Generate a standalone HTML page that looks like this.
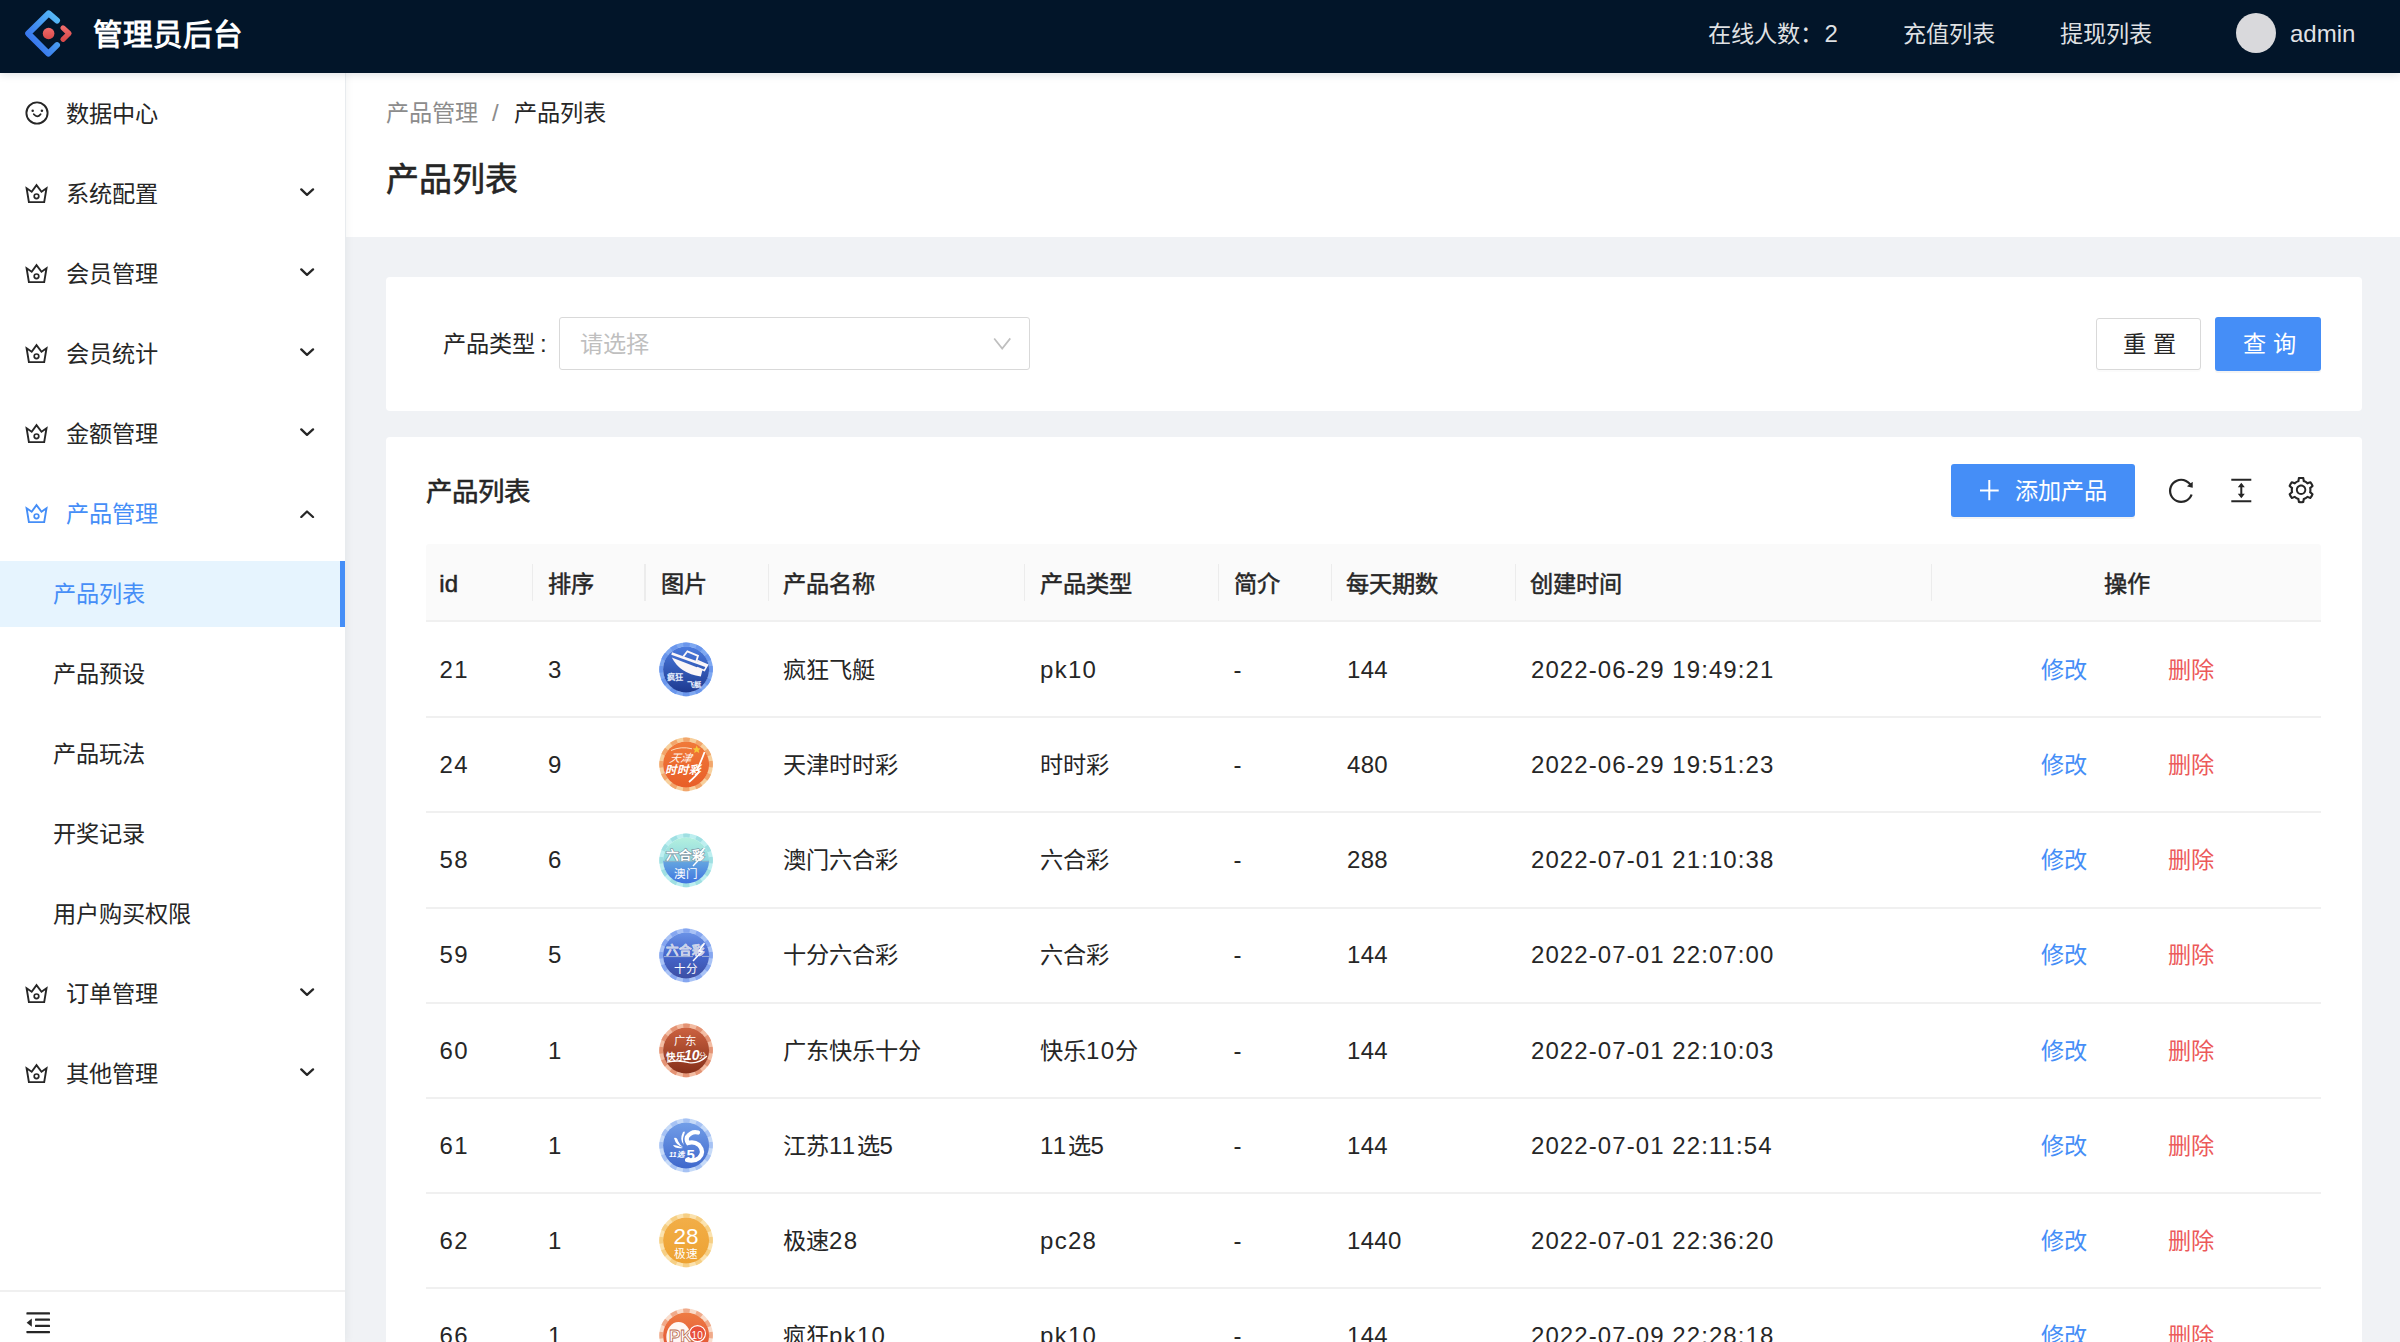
<!DOCTYPE html><html lang="zh-CN"><head><meta charset="utf-8"><title>产品列表</title><style>
html,body{margin:0;padding:0;width:2400px;height:1342px;overflow:hidden;background:#f0f2f5;font-family:"Liberation Sans",sans-serif;}
.t{position:absolute;white-space:nowrap;}
svg text{font-family:"Liberation Sans",sans-serif;}
</style></head><body>
<div style="position:absolute;left:0px;top:0px;width:2400px;height:1342px;background:#f0f2f5"></div>
<div style="position:absolute;left:346px;top:72px;width:2054px;height:165px;background:#fff"></div>
<div style="position:absolute;left:0px;top:72px;width:345px;height:1270px;background:#fff;box-shadow:2px 0 8px 0 rgba(29,35,41,.05)"></div>
<div style="position:absolute;left:0px;top:0px;width:2400px;height:73px;background:#021529;box-shadow:0 2px 8px rgba(0,21,41,.12);z-index:2"></div>
<svg style="position:absolute;left:0;top:0;z-index:3" width="90" height="72" viewBox="0 0 90 72">
<defs>
<linearGradient id="lg1" x1="1" y1="0" x2="0" y2="1"><stop offset="0" stop-color="#58bdf6"/><stop offset="0.6" stop-color="#3f86ee"/><stop offset="1" stop-color="#3468ee"/></linearGradient>
<linearGradient id="lg2" x1="0" y1="0" x2="0" y2="1"><stop offset="0" stop-color="#ef6a6a"/><stop offset="1" stop-color="#d94a4a"/></linearGradient>
</defs>
<path d="M57 20.6 L48.6 13.3 L28.2 33.5 L48.4 53.6 L57 45.2" fill="none" stroke="url(#lg1)" stroke-width="6" stroke-linecap="round" stroke-linejoin="round"/>
<path d="M63 27.9 L69 33.5 L63 39.3" fill="none" stroke="url(#lg2)" stroke-width="5.2" stroke-linecap="round" stroke-linejoin="round"/>
<circle cx="48.6" cy="33.5" r="5.8" fill="url(#lg2)"/>
</svg>
<div class="t " style="left:93.00px;top:19.62px;font-size:29.5px;line-height:29.5px;color:#fff;font-weight:700;z-index:3">管理员后台</div>
<div class="t " style="left:1708.00px;top:23.29px;font-size:23.2px;line-height:23.2px;color:rgba(255,255,255,.88);font-weight:400;z-index:3">在线人数：</div>
<div class="t " style="left:1824.50px;top:22.22px;font-size:24px;line-height:24px;color:rgba(255,255,255,.88);font-weight:400;z-index:3">2</div>
<div class="t " style="left:1903.00px;top:23.29px;font-size:23.2px;line-height:23.2px;color:rgba(255,255,255,.88);font-weight:400;z-index:3">充值列表</div>
<div class="t " style="left:2059.50px;top:23.29px;font-size:23.2px;line-height:23.2px;color:rgba(255,255,255,.88);font-weight:400;z-index:3">提现列表</div>
<div style="position:absolute;left:2235.5px;top:13.3px;width:40px;height:40px;border-radius:50%;background:#d9d9dc;z-index:3"></div>
<div class="t " style="left:2290.00px;top:21.72px;font-size:24px;line-height:24px;color:rgba(255,255,255,.9);font-weight:400;z-index:3">admin</div>
<svg style="position:absolute;left:23.5px;top:100.3px" width="26" height="26" viewBox="0 0 26 26"><circle cx="13" cy="13" r="10.6" fill="none" stroke="#262626" stroke-width="1.9"/><circle cx="8.7" cy="10.7" r="1.25" fill="#262626"/><circle cx="17.9" cy="10.7" r="1.25" fill="#262626"/><path d="M9.8 14.3 Q13.3 18.6 16.6 14.3" fill="none" stroke="#262626" stroke-width="1.8" stroke-linecap="round"/></svg>
<div class="t " style="left:66.00px;top:102.79px;font-size:23.2px;line-height:23.2px;color:#262626;font-weight:400;">数据中心</div>
<svg style="position:absolute;left:23px;top:183.2px" width="26" height="26" viewBox="0 0 26 26"><path d="M3.6 5.2 L8.7 8.7 L13.5 2.1 L18.5 8.7 L23.5 5.2 L21.2 19.1 L5.9 19.1 Z" fill="none" stroke="#262626" stroke-width="1.9" stroke-linejoin="miter"/><circle cx="13.5" cy="13.3" r="2.3" fill="none" stroke="#262626" stroke-width="1.7"/></svg>
<div class="t " style="left:66.00px;top:182.79px;font-size:23.2px;line-height:23.2px;color:#262626;font-weight:400;">系统配置</div>
<svg style="position:absolute;left:299px;top:188.2px" width="16" height="10" viewBox="0 0 16 10"><path d="M2.3 1.4 L8 6.9 L14 1.4" fill="none" stroke="#262626" stroke-width="2.3" stroke-linecap="round" stroke-linejoin="round"/></svg>
<svg style="position:absolute;left:23px;top:263.2px" width="26" height="26" viewBox="0 0 26 26"><path d="M3.6 5.2 L8.7 8.7 L13.5 2.1 L18.5 8.7 L23.5 5.2 L21.2 19.1 L5.9 19.1 Z" fill="none" stroke="#262626" stroke-width="1.9" stroke-linejoin="miter"/><circle cx="13.5" cy="13.3" r="2.3" fill="none" stroke="#262626" stroke-width="1.7"/></svg>
<div class="t " style="left:66.00px;top:262.79px;font-size:23.2px;line-height:23.2px;color:#262626;font-weight:400;">会员管理</div>
<svg style="position:absolute;left:299px;top:268.2px" width="16" height="10" viewBox="0 0 16 10"><path d="M2.3 1.4 L8 6.9 L14 1.4" fill="none" stroke="#262626" stroke-width="2.3" stroke-linecap="round" stroke-linejoin="round"/></svg>
<svg style="position:absolute;left:23px;top:343.2px" width="26" height="26" viewBox="0 0 26 26"><path d="M3.6 5.2 L8.7 8.7 L13.5 2.1 L18.5 8.7 L23.5 5.2 L21.2 19.1 L5.9 19.1 Z" fill="none" stroke="#262626" stroke-width="1.9" stroke-linejoin="miter"/><circle cx="13.5" cy="13.3" r="2.3" fill="none" stroke="#262626" stroke-width="1.7"/></svg>
<div class="t " style="left:66.00px;top:342.79px;font-size:23.2px;line-height:23.2px;color:#262626;font-weight:400;">会员统计</div>
<svg style="position:absolute;left:299px;top:348.2px" width="16" height="10" viewBox="0 0 16 10"><path d="M2.3 1.4 L8 6.9 L14 1.4" fill="none" stroke="#262626" stroke-width="2.3" stroke-linecap="round" stroke-linejoin="round"/></svg>
<svg style="position:absolute;left:23px;top:423.2px" width="26" height="26" viewBox="0 0 26 26"><path d="M3.6 5.2 L8.7 8.7 L13.5 2.1 L18.5 8.7 L23.5 5.2 L21.2 19.1 L5.9 19.1 Z" fill="none" stroke="#262626" stroke-width="1.9" stroke-linejoin="miter"/><circle cx="13.5" cy="13.3" r="2.3" fill="none" stroke="#262626" stroke-width="1.7"/></svg>
<div class="t " style="left:66.00px;top:422.79px;font-size:23.2px;line-height:23.2px;color:#262626;font-weight:400;">金额管理</div>
<svg style="position:absolute;left:299px;top:428.2px" width="16" height="10" viewBox="0 0 16 10"><path d="M2.3 1.4 L8 6.9 L14 1.4" fill="none" stroke="#262626" stroke-width="2.3" stroke-linecap="round" stroke-linejoin="round"/></svg>
<svg style="position:absolute;left:23px;top:503.2px" width="26" height="26" viewBox="0 0 26 26"><path d="M3.6 5.2 L8.7 8.7 L13.5 2.1 L18.5 8.7 L23.5 5.2 L21.2 19.1 L5.9 19.1 Z" fill="none" stroke="#458ef7" stroke-width="1.9" stroke-linejoin="miter"/><circle cx="13.5" cy="13.3" r="2.3" fill="none" stroke="#458ef7" stroke-width="1.7"/></svg>
<div class="t " style="left:66.00px;top:502.79px;font-size:23.2px;line-height:23.2px;color:#458ef7;font-weight:400;">产品管理</div>
<svg style="position:absolute;left:299px;top:508.2px" width="16" height="10" viewBox="0 0 16 10"><path d="M2.3 9.0 L8 3.5 L14 9.0" fill="none" stroke="#262626" stroke-width="2.3" stroke-linecap="round" stroke-linejoin="round"/></svg>
<div style="position:absolute;left:0px;top:561px;width:345px;height:66px;background:#e6f4fe"></div>
<div style="position:absolute;left:340px;top:561px;width:5px;height:66px;background:#458ef7"></div>
<div class="t " style="left:53.00px;top:582.79px;font-size:23.2px;line-height:23.2px;color:#458ef7;font-weight:400;">产品列表</div>
<div class="t " style="left:53.00px;top:662.79px;font-size:23.2px;line-height:23.2px;color:#262626;font-weight:400;">产品预设</div>
<div class="t " style="left:53.00px;top:742.79px;font-size:23.2px;line-height:23.2px;color:#262626;font-weight:400;">产品玩法</div>
<div class="t " style="left:53.00px;top:822.79px;font-size:23.2px;line-height:23.2px;color:#262626;font-weight:400;">开奖记录</div>
<div class="t " style="left:53.00px;top:902.79px;font-size:23.2px;line-height:23.2px;color:#262626;font-weight:400;">用户购买权限</div>
<svg style="position:absolute;left:23px;top:983.2px" width="26" height="26" viewBox="0 0 26 26"><path d="M3.6 5.2 L8.7 8.7 L13.5 2.1 L18.5 8.7 L23.5 5.2 L21.2 19.1 L5.9 19.1 Z" fill="none" stroke="#262626" stroke-width="1.9" stroke-linejoin="miter"/><circle cx="13.5" cy="13.3" r="2.3" fill="none" stroke="#262626" stroke-width="1.7"/></svg>
<div class="t " style="left:66.00px;top:982.79px;font-size:23.2px;line-height:23.2px;color:#262626;font-weight:400;">订单管理</div>
<svg style="position:absolute;left:299px;top:988.2px" width="16" height="10" viewBox="0 0 16 10"><path d="M2.3 1.4 L8 6.9 L14 1.4" fill="none" stroke="#262626" stroke-width="2.3" stroke-linecap="round" stroke-linejoin="round"/></svg>
<svg style="position:absolute;left:23px;top:1063.2px" width="26" height="26" viewBox="0 0 26 26"><path d="M3.6 5.2 L8.7 8.7 L13.5 2.1 L18.5 8.7 L23.5 5.2 L21.2 19.1 L5.9 19.1 Z" fill="none" stroke="#262626" stroke-width="1.9" stroke-linejoin="miter"/><circle cx="13.5" cy="13.3" r="2.3" fill="none" stroke="#262626" stroke-width="1.7"/></svg>
<div class="t " style="left:66.00px;top:1062.79px;font-size:23.2px;line-height:23.2px;color:#262626;font-weight:400;">其他管理</div>
<svg style="position:absolute;left:299px;top:1068.2px" width="16" height="10" viewBox="0 0 16 10"><path d="M2.3 1.4 L8 6.9 L14 1.4" fill="none" stroke="#262626" stroke-width="2.3" stroke-linecap="round" stroke-linejoin="round"/></svg>
<div style="position:absolute;left:0px;top:1290px;width:345px;height:2px;background:#f0f0f0"></div>
<svg style="position:absolute;left:20px;top:1306px" width="36" height="36" viewBox="0 0 36 36"><g fill="#262626"><rect x="6.4" y="6.3" width="23.6" height="2.2" rx="0.6"/><rect x="15" y="12.6" width="15" height="2.2" rx="0.6"/><rect x="15" y="18.8" width="15" height="2.2" rx="0.6"/><rect x="6.4" y="25" width="23.6" height="2.2" rx="0.6"/><path d="M6.6 16.8 L11.8 12.6 L11.8 20.8 Z"/></g></svg>
<div class="t " style="left:386.00px;top:101.79px;font-size:23.2px;line-height:23.2px;color:#8c8c8c;font-weight:400;">产品管理</div>
<div class="t " style="left:492.00px;top:100.72px;font-size:24px;line-height:24px;color:#8c8c8c;font-weight:400;">/</div>
<div class="t " style="left:513.50px;top:101.79px;font-size:23.2px;line-height:23.2px;color:#262626;font-weight:400;">产品列表</div>
<div class="t " style="left:386.00px;top:162.78px;font-size:33px;line-height:33px;color:#262626;font-weight:400;-webkit-text-stroke:0.6px #262626">产品列表</div>
<div style="position:absolute;left:386px;top:277px;width:1976px;height:134px;background:#fff;border-radius:4px"></div>
<div class="t " style="left:443.00px;top:333.29px;font-size:23.2px;line-height:23.2px;color:#262626;font-weight:400;">产品类型</div>
<div class="t " style="left:540.00px;top:332.22px;font-size:24px;line-height:24px;color:#262626;font-weight:400;">:</div>
<div style="position:absolute;left:559px;top:317px;width:471px;height:53px;box-sizing:border-box;border:1.8px solid #d9d9d9;border-radius:3px;background:#fff"></div>
<div class="t " style="left:580.00px;top:333.29px;font-size:23.2px;line-height:23.2px;color:#bfbfbf;font-weight:400;">请选择</div>
<svg style="position:absolute;left:990px;top:334px" width="24" height="20" viewBox="0 0 24 20"><path d="M4.2 4.4 L12.2 14.6 L20.3 4.4" fill="none" stroke="#bfbfbf" stroke-width="1.7"/></svg>
<div style="position:absolute;left:2096px;top:317.5px;width:105px;height:52.5px;box-sizing:border-box;border:1.8px solid #d9d9d9;border-radius:3px;background:#fff;box-shadow:0 2px 0 rgba(0,0,0,.016)"></div>
<div class="t " style="left:2123.00px;top:333.29px;font-size:23.2px;line-height:23.2px;color:#262626;font-weight:400;">重</div>
<div class="t " style="left:2153.20px;top:333.29px;font-size:23.2px;line-height:23.2px;color:#262626;font-weight:400;">置</div>
<div style="position:absolute;left:2215px;top:317px;width:106px;height:53.5px;border-radius:3px;background:#458ef7;box-shadow:0 2px 0 rgba(0,0,0,.045)"></div>
<div class="t " style="left:2242.80px;top:333.29px;font-size:23.2px;line-height:23.2px;color:#fff;font-weight:400;">查</div>
<div class="t " style="left:2272.50px;top:333.29px;font-size:23.2px;line-height:23.2px;color:#fff;font-weight:400;">询</div>
<div style="position:absolute;left:386px;top:437px;width:1976px;height:963px;background:#fff;border-radius:4px"></div>
<div class="t " style="left:426.00px;top:479.34px;font-size:26.5px;line-height:26.5px;color:#262626;font-weight:400;-webkit-text-stroke:0.55px #262626">产品列表</div>
<div style="position:absolute;left:1951px;top:464px;width:183.5px;height:53px;border-radius:3px;background:#458ef7;box-shadow:0 2px 0 rgba(0,0,0,.045)"></div>
<svg style="position:absolute;left:1977px;top:478px" width="24" height="24" viewBox="0 0 24 24"><path d="M12.3 2 V22.3 M3 12.5 H21.7" stroke="#fff" stroke-width="2" fill="none"/></svg>
<div class="t " style="left:2015.30px;top:480.39px;font-size:23.2px;line-height:23.2px;color:#fff;font-weight:400;">添加产品</div>
<svg style="position:absolute;left:2166.3px;top:475.6px" width="29.7" height="29.7" viewBox="0 0 1024 1024"><path fill="#262626" d="M909.1 209.3l-56.4 44.1C775.8 155.1 656.2 92 521.9 92 290 92 102.3 279.5 102 511.5 101.7 743.7 289.8 932 521.9 932c181.3 0 335.8-115 394.6-276.1 1.5-4.2-.7-8.9-4.9-10.3l-56.7-19.5a8 8 0 0 0-10.1 4.8c-1.8 5-3.8 10-5.9 14.9-17.3 41-42.1 77.8-73.700 109.4A344.77 344.77 0 0 1 655.9 829c-42.3 17.9-87.4 27-133.8 27-46.5 0-91.5-9.1-133.8-27A341.5 341.5 0 0 1 279 755.2a342.16 342.16 0 0 1-73.7-109.4c-17.9-42.4-27-87.4-27-133.9s9.1-91.5 27-133.9c17.3-41 42.1-77.8 73.7-109.4 31.6-31.6 68.4-56.4 109.3-73.8 42.3-17.9 87.4-27 133.8-27 46.5 0 91.5 9.1 133.8 27a341.5 341.5 0 0 1 109.3 73.8c9.900 9.9 19.2 20.4 27.8 31.4l-60.2 47a8 8 0 0 0 3 14.1l175.6 43c5 1.2 9.9-2.6 9.9-7.7l.8-180.9c-.1-6.6-7.8-10.3-13-6.2z"/></svg>
<svg style="position:absolute;left:2225px;top:474px" width="32" height="34" viewBox="0 0 32 34"><g stroke="#262626" stroke-width="2" fill="none"><path d="M6.3 5.7 H26.3 M6.3 27.2 H26.3 M16.3 10.5 V22.5"/></g><path d="M16.3 8.8 L12.8 13.2 H19.8 Z M16.3 24.2 L12.8 19.8 H19.8 Z" fill="#262626"/></svg>
<svg style="position:absolute;left:2286.3px;top:475.4px" width="30.2" height="30.2" viewBox="0 0 1024 1024"><path fill="#262626" d="M924.8 625.7l-65.5-56c3.1-19 4.7-38.4 4.7-57.8s-1.6-38.8-4.7-57.8l65.5-56a32.03 32.03 0 0 0 9.3-35.2l-.9-2.6a443.74 443.74 0 0 0-79.7-137.9l-1.8-2.1a32.12 32.12 0 0 0-35.1-9.5l-81.3 28.9c-30-24.6-63.5-44-99.7-57.6l-15.7-85a32.05 32.05 0 0 0-25.8-25.7l-2.7-.5c-52.1-9.4-106.9-9.4-159 0l-2.7.5a32.05 32.05 0 0 0-25.8 25.7l-15.8 85.4a351.86 351.86 0 0 0-99 57.4l-81.9-29.1a32 32 0 0 0-35.1 9.5l-1.8 2.1a446.02 446.02 0 0 0-79.7 137.9l-.9 2.6c-4.5 12.5-.8 26.5 9.3 35.2l66.3 56.6c-3.1 18.8-4.6 38-4.6 57.1 0 19.2 1.5 38.4 4.6 57.1L99 625.5a32.03 32.03 0 0 0-9.3 35.2l.9 2.6c18.1 50.4 44.9 96.9 79.7 137.9l1.8 2.1a32.12 32.12 0 0 0 35.1 9.5l81.9-29.1c29.8 24.5 63.1 43.9 99 57.4l15.8 85.4a32.05 32.05 0 0 0 25.8 25.7l2.7.5a449.4 449.4 0 0 0 159 0l2.7-.5a32.05 32.05 0 0 0 25.8-25.7l15.7-85a350 350 0 0 0 99.7-57.6l81.3 28.9a32 32 0 0 0 35.1-9.5l1.8-2.1c34.8-41.1 61.6-87.5 79.7-137.9l.9-2.6c4.5-12.3.8-26.3-9.3-35zM788.3 465.9c2.5 15.1 3.8 30.6 3.8 46.1s-1.3 31-3.8 46.1l-6.6 40.1 74.7 63.9a370.03 370.03 0 0 1-42.6 73.6L721 702.8l-31.4 25.8c-23.9 19.6-50.5 35-79.3 45.8l-38.1 14.3-17.9 97a377.5 377.5 0 0 1-85 0l-17.9-97.2-37.8-14.5c-28.5-10.8-55-26.2-78.7-45.7l-31.4-25.9-93.4 33.2c-17-22.9-31.2-47.6-42.6-73.6l75.5-64.5-6.5-40c-2.4-14.9-3.7-30.3-3.7-45.5 0-15.3 1.2-30.6 3.7-45.5l6.5-40-75.5-64.5c11.3-26.1 25.6-50.7 42.6-73.6l93.4 33.2 31.4-25.9c23.7-19.5 50.2-34.9 78.7-45.7l37.9-14.3 17.9-97.2c28.1-3.2 56.8-3.2 85 0l17.9 97 38.1 14.3c28.7 10.8 55.4 26.2 79.3 45.8l31.4 25.8 92.8-32.9c17 22.9 31.2 47.6 42.6 73.6L781.8 426l6.5 39.9zM512 326c-97.2 0-176 78.8-176 176s78.8 176 176 176 176-78.8 176-176-78.8-176-176-176zm79.2 255.2A111.6 111.6 0 0 1 512 614c-29.9 0-58-11.7-79.2-32.8A111.6 111.6 0 0 1 400 502c0-29.9 11.7-58 32.8-79.2C454 401.6 482.1 390 512 390c29.9 0 58 11.6 79.2 32.8A111.6 111.6 0 0 1 624 502c0 29.9-11.7 58-32.8 79.2z"/></svg>
<div style="position:absolute;left:426px;top:544px;width:1895px;height:77px;background:#fafafa;border-radius:3px 3px 0 0"></div>
<div style="position:absolute;left:426px;top:620px;width:1895px;height:2px;background:#f0f0f0"></div>
<div style="position:absolute;left:531.9px;top:564px;width:1.6px;height:37px;background:#ececec"></div>
<div style="position:absolute;left:644.4px;top:564px;width:1.6px;height:37px;background:#ececec"></div>
<div style="position:absolute;left:767.7px;top:564px;width:1.6px;height:37px;background:#ececec"></div>
<div style="position:absolute;left:1023.7px;top:564px;width:1.6px;height:37px;background:#ececec"></div>
<div style="position:absolute;left:1217.5px;top:564px;width:1.6px;height:37px;background:#ececec"></div>
<div style="position:absolute;left:1330.5px;top:564px;width:1.6px;height:37px;background:#ececec"></div>
<div style="position:absolute;left:1514.7px;top:564px;width:1.6px;height:37px;background:#ececec"></div>
<div style="position:absolute;left:1930.5px;top:564px;width:1.6px;height:37px;background:#ececec"></div>
<div class="t " style="left:439.30px;top:571.72px;font-size:24px;line-height:24px;color:#262626;font-weight:400;-webkit-text-stroke:0.5px #262626">id</div>
<div class="t " style="left:547.70px;top:572.79px;font-size:23.2px;line-height:23.2px;color:#262626;font-weight:400;-webkit-text-stroke:0.5px #262626">排序</div>
<div class="t " style="left:661.00px;top:572.79px;font-size:23.2px;line-height:23.2px;color:#262626;font-weight:400;-webkit-text-stroke:0.5px #262626">图片</div>
<div class="t " style="left:783.00px;top:572.79px;font-size:23.2px;line-height:23.2px;color:#262626;font-weight:400;-webkit-text-stroke:0.5px #262626">产品名称</div>
<div class="t " style="left:1040.00px;top:572.79px;font-size:23.2px;line-height:23.2px;color:#262626;font-weight:400;-webkit-text-stroke:0.5px #262626">产品类型</div>
<div class="t " style="left:1233.70px;top:572.79px;font-size:23.2px;line-height:23.2px;color:#262626;font-weight:400;-webkit-text-stroke:0.5px #262626">简介</div>
<div class="t " style="left:1346.30px;top:572.79px;font-size:23.2px;line-height:23.2px;color:#262626;font-weight:400;-webkit-text-stroke:0.5px #262626">每天期数</div>
<div class="t " style="left:1530.00px;top:572.79px;font-size:23.2px;line-height:23.2px;color:#262626;font-weight:400;-webkit-text-stroke:0.5px #262626">创建时间</div>
<div class="t " style="left:1626.80px;width:1000px;text-align:center;top:572.79px;font-size:23.2px;line-height:23.2px;color:#262626;font-weight:400;-webkit-text-stroke:0.5px #262626">操作</div>
<div style="position:absolute;left:426px;top:716px;width:1895px;height:2px;background:#f0f0f0"></div>
<div class="t " style="left:439.50px;top:657.92px;font-size:24px;line-height:24px;color:#262626;font-weight:400;"><span style="letter-spacing:1.3px">21</span></div>
<div class="t " style="left:548.00px;top:657.92px;font-size:24px;line-height:24px;color:#262626;font-weight:400;"><span style="letter-spacing:1.3px">3</span></div>
<div class="t " style="left:783.00px;top:658.99px;font-size:23.2px;line-height:23.2px;color:#262626;font-weight:400;">疯狂飞艇</div>
<div class="t " style="left:1040.00px;top:657.92px;font-size:24px;line-height:24px;color:#262626;font-weight:400;"><span style="letter-spacing:1.3px">pk10</span></div>
<div class="t " style="left:1233.50px;top:657.92px;font-size:24px;line-height:24px;color:#262626;font-weight:400;">-</div>
<div class="t " style="left:1347.00px;top:657.92px;font-size:24px;line-height:24px;color:#262626;font-weight:400;"><span style="letter-spacing:0.3px">144</span></div>
<div class="t " style="left:1531.00px;top:657.92px;font-size:24px;line-height:24px;color:#262626;font-weight:400;"><span style="letter-spacing:1.08px">2022-06-29 19:49:21</span></div>
<div class="t " style="left:2040.60px;top:658.99px;font-size:23.2px;line-height:23.2px;color:#458ef7;font-weight:400;">修改</div>
<div class="t " style="left:2167.70px;top:658.99px;font-size:23.2px;line-height:23.2px;color:#ec5a5a;font-weight:400;">删除</div>
<div style="position:absolute;left:426px;top:811px;width:1895px;height:2px;background:#f0f0f0"></div>
<div class="t " style="left:439.50px;top:753.07px;font-size:24px;line-height:24px;color:#262626;font-weight:400;"><span style="letter-spacing:1.3px">24</span></div>
<div class="t " style="left:548.00px;top:753.07px;font-size:24px;line-height:24px;color:#262626;font-weight:400;"><span style="letter-spacing:1.3px">9</span></div>
<div class="t " style="left:783.00px;top:754.14px;font-size:23.2px;line-height:23.2px;color:#262626;font-weight:400;">天津时时彩</div>
<div class="t " style="left:1040.00px;top:754.14px;font-size:23.2px;line-height:23.2px;color:#262626;font-weight:400;">时时彩</div>
<div class="t " style="left:1233.50px;top:753.07px;font-size:24px;line-height:24px;color:#262626;font-weight:400;">-</div>
<div class="t " style="left:1347.00px;top:753.07px;font-size:24px;line-height:24px;color:#262626;font-weight:400;"><span style="letter-spacing:0.3px">480</span></div>
<div class="t " style="left:1531.00px;top:753.07px;font-size:24px;line-height:24px;color:#262626;font-weight:400;"><span style="letter-spacing:1.08px">2022-06-29 19:51:23</span></div>
<div class="t " style="left:2040.60px;top:754.14px;font-size:23.2px;line-height:23.2px;color:#458ef7;font-weight:400;">修改</div>
<div class="t " style="left:2167.70px;top:754.14px;font-size:23.2px;line-height:23.2px;color:#ec5a5a;font-weight:400;">删除</div>
<div style="position:absolute;left:426px;top:907px;width:1895px;height:2px;background:#f0f0f0"></div>
<div class="t " style="left:439.50px;top:848.22px;font-size:24px;line-height:24px;color:#262626;font-weight:400;"><span style="letter-spacing:1.3px">58</span></div>
<div class="t " style="left:548.00px;top:848.22px;font-size:24px;line-height:24px;color:#262626;font-weight:400;"><span style="letter-spacing:1.3px">6</span></div>
<div class="t " style="left:783.00px;top:849.29px;font-size:23.2px;line-height:23.2px;color:#262626;font-weight:400;">澳门六合彩</div>
<div class="t " style="left:1040.00px;top:849.29px;font-size:23.2px;line-height:23.2px;color:#262626;font-weight:400;">六合彩</div>
<div class="t " style="left:1233.50px;top:848.22px;font-size:24px;line-height:24px;color:#262626;font-weight:400;">-</div>
<div class="t " style="left:1347.00px;top:848.22px;font-size:24px;line-height:24px;color:#262626;font-weight:400;"><span style="letter-spacing:0.3px">288</span></div>
<div class="t " style="left:1531.00px;top:848.22px;font-size:24px;line-height:24px;color:#262626;font-weight:400;"><span style="letter-spacing:1.08px">2022-07-01 21:10:38</span></div>
<div class="t " style="left:2040.60px;top:849.29px;font-size:23.2px;line-height:23.2px;color:#458ef7;font-weight:400;">修改</div>
<div class="t " style="left:2167.70px;top:849.29px;font-size:23.2px;line-height:23.2px;color:#ec5a5a;font-weight:400;">删除</div>
<div style="position:absolute;left:426px;top:1002px;width:1895px;height:2px;background:#f0f0f0"></div>
<div class="t " style="left:439.50px;top:943.37px;font-size:24px;line-height:24px;color:#262626;font-weight:400;"><span style="letter-spacing:1.3px">59</span></div>
<div class="t " style="left:548.00px;top:943.37px;font-size:24px;line-height:24px;color:#262626;font-weight:400;"><span style="letter-spacing:1.3px">5</span></div>
<div class="t " style="left:783.00px;top:944.44px;font-size:23.2px;line-height:23.2px;color:#262626;font-weight:400;">十分六合彩</div>
<div class="t " style="left:1040.00px;top:944.44px;font-size:23.2px;line-height:23.2px;color:#262626;font-weight:400;">六合彩</div>
<div class="t " style="left:1233.50px;top:943.37px;font-size:24px;line-height:24px;color:#262626;font-weight:400;">-</div>
<div class="t " style="left:1347.00px;top:943.37px;font-size:24px;line-height:24px;color:#262626;font-weight:400;"><span style="letter-spacing:0.3px">144</span></div>
<div class="t " style="left:1531.00px;top:943.37px;font-size:24px;line-height:24px;color:#262626;font-weight:400;"><span style="letter-spacing:1.08px">2022-07-01 22:07:00</span></div>
<div class="t " style="left:2040.60px;top:944.44px;font-size:23.2px;line-height:23.2px;color:#458ef7;font-weight:400;">修改</div>
<div class="t " style="left:2167.70px;top:944.44px;font-size:23.2px;line-height:23.2px;color:#ec5a5a;font-weight:400;">删除</div>
<div style="position:absolute;left:426px;top:1097px;width:1895px;height:2px;background:#f0f0f0"></div>
<div class="t " style="left:439.50px;top:1038.52px;font-size:24px;line-height:24px;color:#262626;font-weight:400;"><span style="letter-spacing:1.3px">60</span></div>
<div class="t " style="left:548.00px;top:1038.52px;font-size:24px;line-height:24px;color:#262626;font-weight:400;"><span style="letter-spacing:1.3px">1</span></div>
<div class="t " style="left:783.00px;top:1039.59px;font-size:23.2px;line-height:23.2px;color:#262626;font-weight:400;">广东快乐十分</div>
<div class="t " style="left:1040.00px;top:1039.59px;font-size:23.2px;line-height:23.2px;color:#262626;font-weight:400;">快乐<span style="font-size:24px;line-height:0;letter-spacing:1.3px">10</span>分</div>
<div class="t " style="left:1233.50px;top:1038.52px;font-size:24px;line-height:24px;color:#262626;font-weight:400;">-</div>
<div class="t " style="left:1347.00px;top:1038.52px;font-size:24px;line-height:24px;color:#262626;font-weight:400;"><span style="letter-spacing:0.3px">144</span></div>
<div class="t " style="left:1531.00px;top:1038.52px;font-size:24px;line-height:24px;color:#262626;font-weight:400;"><span style="letter-spacing:1.08px">2022-07-01 22:10:03</span></div>
<div class="t " style="left:2040.60px;top:1039.59px;font-size:23.2px;line-height:23.2px;color:#458ef7;font-weight:400;">修改</div>
<div class="t " style="left:2167.70px;top:1039.59px;font-size:23.2px;line-height:23.2px;color:#ec5a5a;font-weight:400;">删除</div>
<div style="position:absolute;left:426px;top:1192px;width:1895px;height:2px;background:#f0f0f0"></div>
<div class="t " style="left:439.50px;top:1133.67px;font-size:24px;line-height:24px;color:#262626;font-weight:400;"><span style="letter-spacing:1.3px">61</span></div>
<div class="t " style="left:548.00px;top:1133.67px;font-size:24px;line-height:24px;color:#262626;font-weight:400;"><span style="letter-spacing:1.3px">1</span></div>
<div class="t " style="left:783.00px;top:1134.74px;font-size:23.2px;line-height:23.2px;color:#262626;font-weight:400;">江苏<span style="font-size:24px;line-height:0;letter-spacing:1.3px">11</span>选<span style="font-size:24px;line-height:0;letter-spacing:1.3px">5</span></div>
<div class="t " style="left:1040.00px;top:1134.74px;font-size:23.2px;line-height:23.2px;color:#262626;font-weight:400;"><span style="font-size:24px;line-height:0;letter-spacing:1.3px">11</span>选<span style="font-size:24px;line-height:0;letter-spacing:1.3px">5</span></div>
<div class="t " style="left:1233.50px;top:1133.67px;font-size:24px;line-height:24px;color:#262626;font-weight:400;">-</div>
<div class="t " style="left:1347.00px;top:1133.67px;font-size:24px;line-height:24px;color:#262626;font-weight:400;"><span style="letter-spacing:0.3px">144</span></div>
<div class="t " style="left:1531.00px;top:1133.67px;font-size:24px;line-height:24px;color:#262626;font-weight:400;"><span style="letter-spacing:1.08px">2022-07-01 22:11:54</span></div>
<div class="t " style="left:2040.60px;top:1134.74px;font-size:23.2px;line-height:23.2px;color:#458ef7;font-weight:400;">修改</div>
<div class="t " style="left:2167.70px;top:1134.74px;font-size:23.2px;line-height:23.2px;color:#ec5a5a;font-weight:400;">删除</div>
<div style="position:absolute;left:426px;top:1287px;width:1895px;height:2px;background:#f0f0f0"></div>
<div class="t " style="left:439.50px;top:1228.82px;font-size:24px;line-height:24px;color:#262626;font-weight:400;"><span style="letter-spacing:1.3px">62</span></div>
<div class="t " style="left:548.00px;top:1228.82px;font-size:24px;line-height:24px;color:#262626;font-weight:400;"><span style="letter-spacing:1.3px">1</span></div>
<div class="t " style="left:783.00px;top:1229.89px;font-size:23.2px;line-height:23.2px;color:#262626;font-weight:400;">极速<span style="font-size:24px;line-height:0;letter-spacing:1.3px">28</span></div>
<div class="t " style="left:1040.00px;top:1228.82px;font-size:24px;line-height:24px;color:#262626;font-weight:400;"><span style="letter-spacing:1.3px">pc28</span></div>
<div class="t " style="left:1233.50px;top:1228.82px;font-size:24px;line-height:24px;color:#262626;font-weight:400;">-</div>
<div class="t " style="left:1347.00px;top:1228.82px;font-size:24px;line-height:24px;color:#262626;font-weight:400;"><span style="letter-spacing:0.3px">1440</span></div>
<div class="t " style="left:1531.00px;top:1228.82px;font-size:24px;line-height:24px;color:#262626;font-weight:400;"><span style="letter-spacing:1.08px">2022-07-01 22:36:20</span></div>
<div class="t " style="left:2040.60px;top:1229.89px;font-size:23.2px;line-height:23.2px;color:#458ef7;font-weight:400;">修改</div>
<div class="t " style="left:2167.70px;top:1229.89px;font-size:23.2px;line-height:23.2px;color:#ec5a5a;font-weight:400;">删除</div>
<div style="position:absolute;left:426px;top:1382px;width:1895px;height:2px;background:#f0f0f0"></div>
<div class="t " style="left:439.50px;top:1323.97px;font-size:24px;line-height:24px;color:#262626;font-weight:400;"><span style="letter-spacing:1.3px">66</span></div>
<div class="t " style="left:548.00px;top:1323.97px;font-size:24px;line-height:24px;color:#262626;font-weight:400;"><span style="letter-spacing:1.3px">1</span></div>
<div class="t " style="left:783.00px;top:1325.04px;font-size:23.2px;line-height:23.2px;color:#262626;font-weight:400;">疯狂<span style="font-size:24px;line-height:0;letter-spacing:1.3px">pk10</span></div>
<div class="t " style="left:1040.00px;top:1323.97px;font-size:24px;line-height:24px;color:#262626;font-weight:400;"><span style="letter-spacing:1.3px">pk10</span></div>
<div class="t " style="left:1233.50px;top:1323.97px;font-size:24px;line-height:24px;color:#262626;font-weight:400;">-</div>
<div class="t " style="left:1347.00px;top:1323.97px;font-size:24px;line-height:24px;color:#262626;font-weight:400;"><span style="letter-spacing:0.3px">144</span></div>
<div class="t " style="left:1531.00px;top:1323.97px;font-size:24px;line-height:24px;color:#262626;font-weight:400;"><span style="letter-spacing:1.08px">2022-07-09 22:28:18</span></div>
<div class="t " style="left:2040.60px;top:1325.04px;font-size:23.2px;line-height:23.2px;color:#458ef7;font-weight:400;">修改</div>
<div class="t " style="left:2167.70px;top:1325.04px;font-size:23.2px;line-height:23.2px;color:#ec5a5a;font-weight:400;">删除</div>
<svg style="position:absolute;left:659px;top:642.2px" width="54" height="55" viewBox="0 0 54 55"><defs><linearGradient id="pg1" x1="0" y1="0" x2="0" y2="1"><stop offset="0" stop-color="#4b7bde"/><stop offset="1" stop-color="#1d3990"/></linearGradient></defs><circle cx="27.1" cy="27.4" r="24.85" fill="none" stroke="#7ea8f2" stroke-width="3.9"/><circle cx="27.1" cy="27.4" r="24.85" fill="none" stroke="#6a96ec" stroke-width="3.9" stroke-dasharray="6.5 6.5" transform="rotate(-8 27.1 27.4)"/><circle cx="27.1" cy="27.4" r="23" fill="url(#pg1)"/><path d="M12.8 15.4 L43.6 27.6 L41.8 34.4 Q21 31.5 12.8 15.4 Z" fill="#fbf6f8"/><path d="M13 10.2 L48.8 23 L47.8 25.6 L12.3 12.8 Z" fill="#fbf6f8"/><path d="M24.3 14.6 L28.4 9.3 L39 13.8 L37 20.2" fill="none" stroke="#fbf6f8" stroke-width="1.8"/><path d="M38.2 18.4 L48.4 23 L45.4 28.6 L38 25.6" fill="none" stroke="#fbf6f8" stroke-width="1.6"/><text x="7.6" y="37.6" font-size="8.2" fill="#e8eefc" font-weight="bold">疯狂</text><text x="27.6" y="45.4" font-size="7.2" fill="#e8eefc" font-weight="bold">飞艇</text></svg>
<svg style="position:absolute;left:659px;top:737.4px" width="54" height="55" viewBox="0 0 54 55"><defs><linearGradient id="pg2" x1="0" y1="0" x2="0" y2="1"><stop offset="0" stop-color="#f07a3a"/><stop offset="1" stop-color="#e85e28"/></linearGradient></defs><circle cx="27.1" cy="27.4" r="24.85" fill="none" stroke="#f7cf9c" stroke-width="3.9"/><circle cx="27.1" cy="27.4" r="24.85" fill="none" stroke="#f2a66c" stroke-width="3.9" stroke-dasharray="6.5 6.5" transform="rotate(-8 27.1 27.4)"/><circle cx="27.1" cy="27.4" r="23" fill="url(#pg2)"/><path d="M12 13.5 Q22 9 33 11.8" fill="none" stroke="#fde6c8" stroke-width="0.9"/><path d="M37.7 8.6 L38.9 11.2 L41.6 11.5 L39.6 13.3 L40.2 16 L37.7 14.6 L35.2 16 L35.8 13.3 L33.8 11.5 L36.5 11.2 Z" fill="#f5c838"/><text x="11" y="24.8" font-size="11" fill="#fff3ea" font-style="italic" transform="skewX(-12) translate(4 0)">天津</text><text x="8.5" y="37" font-size="11.5" fill="#fff" font-weight="bold" transform="skewX(-14) translate(7 0)">时时彩</text><path d="M45.6 15 Q41 27 38 33 Q44 33 30 45" fill="none" stroke="#fff" stroke-width="1.8"/></svg>
<svg style="position:absolute;left:659px;top:832.5px" width="54" height="55" viewBox="0 0 54 55"><defs><linearGradient id="pg3" x1="0" y1="0" x2="0" y2="1"><stop offset="0" stop-color="#b4f0de"/><stop offset="0.5" stop-color="#8fd8e0"/><stop offset="0.52" stop-color="#64a6e0"/><stop offset="1" stop-color="#3f74e0"/></linearGradient></defs><circle cx="27.1" cy="27.4" r="24.85" fill="none" stroke="#bdeff0" stroke-width="3.9"/><circle cx="27.1" cy="27.4" r="24.85" fill="none" stroke="#9fdfe2" stroke-width="3.9" stroke-dasharray="6.5 6.5" transform="rotate(-8 27.1 27.4)"/><circle cx="27.1" cy="27.4" r="23" fill="url(#pg3)"/><text x="7.4" y="27.4" font-size="12.5" fill="#fff" font-weight="bold" stroke="#7d96a4" stroke-width="1.3" paint-order="stroke">六合彩</text><path d="M5 28.6 H34 M43 28.4 H50" stroke="#8ab0c8" stroke-width="0.9"/><path d="M45.5 15 L40 23 L43 23.5 L34 33" fill="none" stroke="#fff" stroke-width="1.4"/><text x="14.8" y="44.6" font-size="11.6" fill="#fff">澳门</text></svg>
<svg style="position:absolute;left:659px;top:927.7px" width="54" height="55" viewBox="0 0 54 55"><defs><linearGradient id="pg4" x1="0" y1="0" x2="0" y2="1"><stop offset="0" stop-color="#6a92e6"/><stop offset="0.5" stop-color="#4466cc"/><stop offset="1" stop-color="#3c4ea4"/></linearGradient></defs><circle cx="27.1" cy="27.4" r="24.85" fill="none" stroke="#a8c2f6" stroke-width="3.9"/><circle cx="27.1" cy="27.4" r="24.85" fill="none" stroke="#85a6f0" stroke-width="3.9" stroke-dasharray="6.5 6.5" transform="rotate(-8 27.1 27.4)"/><circle cx="27.1" cy="27.4" r="23" fill="url(#pg4)"/><text x="7.4" y="27.4" font-size="12.5" fill="#fff" font-weight="bold" stroke="#c8d0e8" stroke-width="0.3">六合彩</text><path d="M5 28.6 H34 M43 28.4 H50" stroke="#b0bcd8" stroke-width="0.9"/><path d="M45.5 15 L40 23 L43 23.5 L34 33" fill="none" stroke="#fff" stroke-width="1.4"/><text x="14.8" y="44.8" font-size="11.6" fill="#fff">十分</text></svg>
<svg style="position:absolute;left:659px;top:1022.8px" width="54" height="55" viewBox="0 0 54 55"><defs><linearGradient id="pg5" x1="0" y1="0" x2="0" y2="1"><stop offset="0" stop-color="#cc6240"/><stop offset="1" stop-color="#86301a"/></linearGradient></defs><circle cx="27.1" cy="27.4" r="24.85" fill="none" stroke="#f3bca2" stroke-width="3.9"/><circle cx="27.1" cy="27.4" r="24.85" fill="none" stroke="#e49374" stroke-width="3.9" stroke-dasharray="6.5 6.5" transform="rotate(-8 27.1 27.4)"/><circle cx="27.1" cy="27.4" r="23" fill="url(#pg5)"/><text x="14.8" y="22.4" font-size="11.4" fill="#fff">广东</text><text x="6.6" y="36.8" font-size="9.6" fill="#fff" font-weight="bold">快乐</text><text x="25" y="37.4" font-size="14" fill="#fff" font-weight="bold" font-style="italic">10</text><text x="40" y="35" font-size="7" fill="#fff">分</text><path d="M8 39.2 Q20 36.6 30 39.6 Q40 41 48 33" fill="none" stroke="#fff" stroke-width="1.3"/></svg>
<svg style="position:absolute;left:659px;top:1118.0px" width="54" height="55" viewBox="0 0 54 55"><defs><linearGradient id="pg6" x1="0" y1="0" x2="0" y2="1"><stop offset="0" stop-color="#729ee8"/><stop offset="1" stop-color="#3f68cc"/></linearGradient></defs><circle cx="27.1" cy="27.4" r="24.85" fill="none" stroke="#c6daf8" stroke-width="3.9"/><circle cx="27.1" cy="27.4" r="24.85" fill="none" stroke="#a6c2f4" stroke-width="3.9" stroke-dasharray="6.5 6.5" transform="rotate(-8 27.1 27.4)"/><circle cx="27.1" cy="27.4" r="23" fill="url(#pg6)"/><path d="M24 14 Q27 12 25 17 Q23 22 25 27 Q20 22 24 14 Z" fill="#fff"/><path d="M15 20 Q18 19 19 23 Q21 27 24 29 Q17 28 15 20 Z" fill="#fff"/><path d="M14 27 Q18 27 24 30 Q16 31 14 27 Z" fill="#fff"/><path d="M39 14.5 Q33 12.5 28 19 Q27 22 29 25 Q35 23 40 27 Q46 34 40 40 Q35 44 28 42" fill="none" stroke="#fff" stroke-width="4.2" stroke-linecap="round"/><text x="27.6" y="41.6" font-size="15" fill="#fff" font-weight="bold">5</text><text x="10" y="39" font-size="7.4" fill="#fff" font-weight="bold" font-style="italic">11选</text></svg>
<svg style="position:absolute;left:659px;top:1213.1px" width="54" height="55" viewBox="0 0 54 55"><defs><linearGradient id="pg7" x1="0" y1="0" x2="0" y2="1"><stop offset="0" stop-color="#f2ae48"/><stop offset="1" stop-color="#eda232"/></linearGradient></defs><circle cx="27.1" cy="27.4" r="24.85" fill="none" stroke="#fbe2ae" stroke-width="3.9"/><circle cx="27.1" cy="27.4" r="24.85" fill="none" stroke="#f6cf84" stroke-width="3.9" stroke-dasharray="6.5 6.5" transform="rotate(-8 27.1 27.4)"/><circle cx="27.1" cy="27.4" r="23" fill="url(#pg7)"/><text x="27.1" y="31.4" font-size="22.5" fill="#fff" text-anchor="middle">28</text><text x="27.1" y="44.8" font-size="11.6" fill="#fff" text-anchor="middle">极速</text></svg>
<svg style="position:absolute;left:659px;top:1308.2px" width="54" height="55" viewBox="0 0 54 55"><defs><linearGradient id="pg8" x1="0" y1="0" x2="0" y2="1"><stop offset="0" stop-color="#ee7c44"/><stop offset="1" stop-color="#e04a30"/></linearGradient></defs><circle cx="27.1" cy="27.4" r="24.85" fill="none" stroke="#f9dccb" stroke-width="3.9"/><circle cx="27.1" cy="27.4" r="24.85" fill="none" stroke="#f0aa8a" stroke-width="3.9" stroke-dasharray="6.5 6.5" transform="rotate(-8 27.1 27.4)"/><circle cx="27.1" cy="27.4" r="23" fill="url(#pg8)"/><ellipse cx="19.5" cy="29" rx="12.2" ry="15" fill="#fff8f6"/><text x="10" y="34" font-size="17" fill="#fff" stroke="#b8684a" stroke-width="0.8" font-weight="bold">PK</text><circle cx="38.5" cy="25.6" r="8" fill="#e8503a" stroke="#fff" stroke-width="1.1"/><text x="32.6" y="30.6" font-size="10" fill="#fff">10</text></svg>
</body></html>
